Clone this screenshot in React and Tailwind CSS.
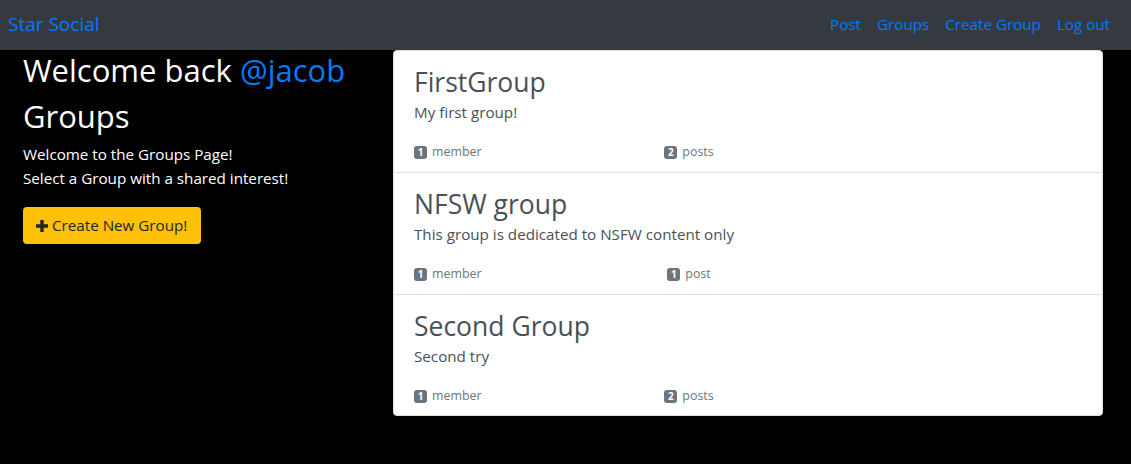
import React from 'react';

const groups = [
  { name: 'FirstGroup', description: 'My first group!', members: 1, posts: 2 },
  { name: 'NFSW group', description: 'This group is dedicated to NSFW content only', members: 1, posts: 1 },
  { name: 'Second Group', description: 'Second try', members: 1, posts: 2 },
];

const Badge = ({ children }) => (
  <span className="inline-flex items-center justify-center h-[13px] min-w-[13px] px-[3px] rounded-[3px] bg-[#6c757d] text-white text-[10px] font-bold leading-none mr-[5px]">
    {children}
  </span>
);

const GroupItem = ({ group, last }) => (
  <div className={`px-5 pt-[13px] ${last ? 'h-[120px]' : 'h-[122px] border-b border-[#dfdfdf]'}`}>
    <h3 className="text-[26.5px] leading-[36px] text-[#495057]">{group.name}</h3>
    <p className="text-[15.2px] leading-[24px] text-[#495057]">{group.description}</p>
    <div className="flex mt-[18px] text-[12.4px] leading-[20px] text-[#6c757d]">
      <div className="w-[230px] flex items-center">
        <Badge>{group.members}</Badge>
        member
      </div>
      <div className="w-[90px] flex items-center justify-center">
        <Badge>{group.posts}</Badge>
        {group.posts === 1 ? 'post' : 'posts'}
      </div>
    </div>
  </div>
);

const App = () => {
  return (
    <div className="min-h-[464px] bg-black font-['Open_Sans',sans-serif]">
      <nav className="h-[50px] bg-[#343a40] flex items-center justify-between pl-2 pr-[21px] pb-[2px]">
        <a href="#" className="text-[19px] text-[#007bff] leading-none">Star Social</a>
        <div className="flex items-center gap-[16px] text-[15.2px] text-[#007bff]">
          <a href="#">Post</a>
          <a href="#">Groups</a>
          <a href="#">Create Group</a>
          <a href="#">Log out</a>
        </div>
      </nav>

      <div className="flex">
        <div className="w-[393px] pl-[23px]">
          <h2 className="text-[31px] leading-[40px] text-white">
            Welcome back <span className="text-[#007bff]">@jacob</span>
          </h2>
          <h2 className="text-[31px] leading-[40px] text-white mt-[6px]">Groups</h2>
          <p className="mt-[6px] text-[15.2px] leading-[24px] text-white">
            Welcome to the Groups Page!
            <br />
            Select a Group with a shared interest!
          </p>
          <button className="mt-[17px] h-[37px] pl-[13px] pr-[14px] rounded-[4px] bg-[#ffc107] text-[#212529] text-[15.2px] flex items-center">
            <svg width="12" height="12" viewBox="0 0 12 12" className="mr-[4px]">
              <path d="M4.3 0h3.4v4.3H12v3.4H7.7V12H4.3V7.7H0V4.3h4.3z" fill="#212529" />
            </svg>
            Create New Group!
          </button>
        </div>

        <div className="w-[710px] h-fit bg-white rounded-[4px] border border-[#dfdfdf] overflow-hidden">
          {groups.map((g, i) => (
            <GroupItem key={g.name} group={g} last={i === groups.length - 1} />
          ))}
        </div>
      </div>
    </div>
  );
};

export default App;
